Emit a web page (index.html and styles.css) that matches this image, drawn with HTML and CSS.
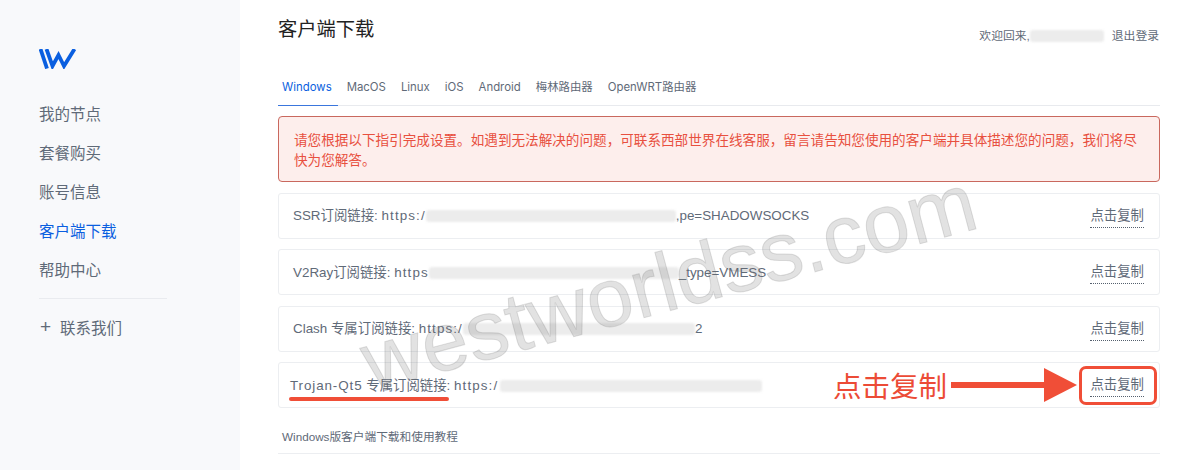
FILE: index.html
```html
<!DOCTYPE html>
<html lang="zh-CN">
<head>
    <meta charset="UTF-8">
    <title>客户端下载</title>
    <link rel="stylesheet" href="styles.css">
</head>
<body>
    <aside class="sidebar">
        <svg class="logo" viewBox="0 0 37 20" fill="none" stroke="#0a5fe0" stroke-width="3.8">
            <path d="M1.5 0L8 19.5"/>
            <path d="M7.5 0L13.5 17L19.5 6L25 17L35.5 0"/>
        </svg>
        <nav class="nav">
            <a class="nav-item">我的节点</a>
            <a class="nav-item">套餐购买</a>
            <a class="nav-item">账号信息</a>
            <a class="nav-item active">客户端下载</a>
            <a class="nav-item">帮助中心</a>
        </nav>
        <div class="nav-divider"></div>
        <a class="nav-contact"><span class="plus">+</span>联系我们</a>
    </aside>

    <main class="main">
        <header class="page-header">
            <h1>客户端下载</h1>
            <div class="user-info">
                <span>欢迎回来,</span>
                <span class="mask mask-user"></span>
                <a>退出登录</a>
            </div>
        </header>

        <ul class="tabs">
            <li class="tab active">Windows</li>
            <li class="tab">MacOS</li>
            <li class="tab">Linux</li>
            <li class="tab">iOS</li>
            <li class="tab">Android</li>
            <li class="tab">梅林路由器</li>
            <li class="tab">OpenWRT路由器</li>
        </ul>

        <div class="alert">请您根据以下指引完成设置。如遇到无法解决的问题&#65292;可联系西部世界在线客服&#65292;留言请告知您使用的客户端并具体描述您的问题&#65292;我们将尽快为您解答。</div>

        <div class="link-row">
            <div class="link-text">SSR订阅链接: <span class="url">https:/</span><span class="mask mask-1"></span>,pe=SHADOWSOCKS</div>
            <a class="copy">点击复制</a>
        </div>
        <div class="link-row">
            <div class="link-text">V2Ray订阅链接: <span class="url">https</span><span class="mask mask-2"></span>_type=VMESS</div>
            <a class="copy">点击复制</a>
        </div>
        <div class="link-row">
            <div class="link-text">Clash 专属订阅链接: <span class="url">https:/</span><span class="mask mask-3"></span>2</div>
            <a class="copy">点击复制</a>
        </div>
        <div class="link-row trojan">
            <div class="link-text"><span class="client">Trojan-Qt5</span> 专属订阅链接: <span class="url">https:/</span><span class="mask mask-4"></span></div>
            <a class="copy">点击复制</a>
        </div>

        <div class="tutorial">Windows版客户端下载和使用教程</div>
    </main>

    <!-- annotations on top of the screenshot -->
    <div class="mark-line"></div>
    <div class="mark-text">点击复制</div>
    <svg class="mark-arrow" viewBox="0 0 126 34">
        <rect x="0" y="14" width="94" height="6" fill="#f04e37"/>
        <path d="M93 0L126 17L93 34Z" fill="#f04e37"/>
    </svg>
    <div class="mark-box"></div>
    <div class="watermark">westworldss.com</div>
</body>
</html>
```

FILE: styles.css
```css
* {
    box-sizing: border-box;
}
html, body {
    height: 470px;
}
body {
    margin: 0;
    display: flex;
    overflow: hidden;
    position: relative;
    background: #fff;
    color: #5f6a78;
    font-family: "Liberation Sans", "Noto Sans CJK SC", sans-serif;
}
.sidebar {
    width: 240px;
    flex-shrink: 0;
    background: #f8f9fb;
    padding: 49px 0 0 39px;
}
.logo {
    display: block;
    width: 37px;
    height: 20px;
}
.nav {
    margin-top: 26px;
    display: flex;
    flex-direction: column;
}
.nav-item {
    height: 39px;
    line-height: 39px;
    font-size: 15.5px;
}
.nav-item.active {
    color: #0a5fe0;
}
.nav-divider {
    width: 128px;
    height: 1px;
    margin-top: 8px;
    background: #e9ebef;
}
.nav-contact {
    display: flex;
    align-items: center;
    height: 20px;
    margin-top: 18px;
    font-size: 15.5px;
}
.plus {
    width: 21px;
    font-size: 19px;
    font-weight: 300;
    padding-left: 1px;
}
.main {
    width: 882px;
    margin-left: 38px;
    flex-shrink: 0;
}
.page-header {
    display: flex;
    justify-content: space-between;
    align-items: flex-start;
    height: 68px;
}
h1 {
    margin: 17px 0 0;
    font-size: 19.3px;
    line-height: 26px;
    font-weight: 400;
    color: #222;
}
.user-info {
    display: flex;
    align-items: center;
    margin-top: 28px;
    font-size: 11.8px;
    line-height: 16px;
    padding-right: 1px;
}
.mask {
    display: inline-block;
    background: #ececec;
    border-radius: 3px;
    height: 12px;
    vertical-align: -2px;
    filter: blur(0.8px);
}
.mask-user {
    width: 74px;
    margin: 0 8px 0 0;
}
.tabs {
    display: flex;
    gap: 5px;
    list-style: none;
    margin: 0;
    padding: 0;
    height: 38px;
    border-bottom: 1px solid #e8eaee;
    font-family: "Inter", "Noto Sans CJK SC", sans-serif;
    font-size: 11.4px;
}
.tab {
    padding: 11px 5px 0;
    height: 38px;
    line-height: 17px;
}
.tab.active {
    padding-left: 4px;
    padding-right: 6px;
    margin-right: -1px;
    color: #0a5fe0;
    border-bottom: 1px solid #3a76dd;
}
.alert {
    margin-top: 10px;
    height: 66px;
    padding: 14px 15px 0;
    font-size: 13.6px;
    line-height: 20px;
    color: #e8503f;
    background: #fdeeec;
    border: 1px solid #c9685e;
    border-radius: 4px;
}
.link-row {
    display: flex;
    justify-content: space-between;
    align-items: center;
    height: 46px;
    margin-top: 10.5px;
    padding: 0 15px 0 14px;
    border: 1px solid #eceef1;
    border-radius: 3px;
    font-size: 13.4px;
}
.trojan {
    padding-left: 11px;
}
.link-text {
    white-space: nowrap;
    padding-bottom: 3px;
}
.url {
    letter-spacing: 1.1px;
}
.client {
    letter-spacing: 0.9px;
}
.copy {
    font-size: 13.4px;
    line-height: 18px;
    padding: 3px 0 2px;
    border-bottom: 1px dotted #55606e;
}
.mask-1 {
    width: 250px;
}
.mask-2 {
    width: 250px;
}
.mask-3 {
    width: 232px;
}
.mask-4 {
    width: 262px;
    margin-left: 2px;
}
.tutorial {
    height: 36px;
    margin-top: 10px;
    padding: 10px 0 0 4px;
    font-size: 11.7px;
    line-height: 17px;
    border-bottom: 1px solid #eceef1;
}
.mark-line {
    position: absolute;
    left: 289px;
    top: 397px;
    width: 160px;
    height: 4px;
    border-radius: 2px;
    background: #f04e37;
}
.mark-text {
    position: absolute;
    left: 833px;
    top: 369px;
    font-size: 28.5px;
    line-height: 36px;
    color: #ec4b36;
}
.mark-arrow {
    position: absolute;
    left: 951px;
    top: 368px;
    width: 126px;
    height: 34px;
}
.mark-box {
    position: absolute;
    left: 1079px;
    top: 366px;
    width: 78px;
    height: 39px;
    border: 3px solid #f04e37;
    border-radius: 7px;
}
.watermark {
    position: absolute;
    left: 349px;
    top: 232px;
    width: 640px;
    text-align: center;
    transform: rotate(-15deg);
    font-size: 83px;
    line-height: 100px;
    color: rgba(110, 110, 110, 0.2);
    -webkit-text-stroke: 1px rgba(110, 110, 110, 0.2);
    white-space: nowrap;
}
```
